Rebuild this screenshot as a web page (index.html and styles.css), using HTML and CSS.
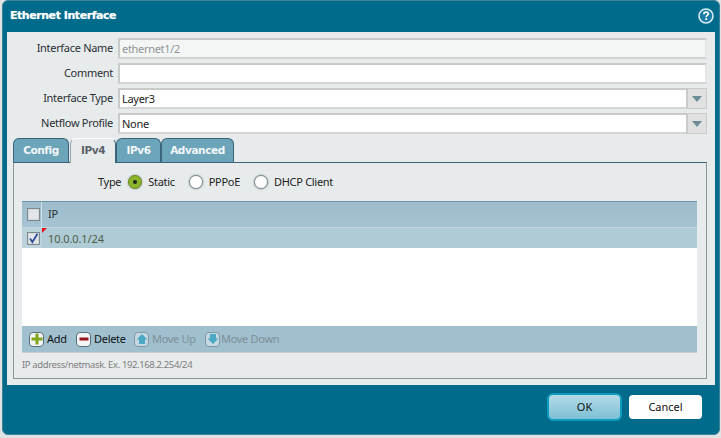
FILE: index.html
```html
<!DOCTYPE html>
<html lang="en">
<head>
<meta charset="utf-8">
<title>Ethernet Interface</title>
<link rel="stylesheet" href="styles.css">
</head>
<body>
<div class="dialog">
  <header class="titlebar">
    <span class="title">Ethernet Interface</span>
    <svg class="help" width="16" height="16" viewBox="0 0 16 16"><circle cx="8" cy="8" r="7" fill="#1b7da6" stroke="#d6edf5" stroke-width="1.6"/><path d="M5.8 6.2C5.9 4.8 6.9 4.1 8.1 4.1C9.4 4.1 10.3 4.9 10.3 6C10.3 7.4 8.2 7.5 8.2 9.2" fill="none" stroke="#fff" stroke-width="1.6"/><rect x="7.3" y="10.3" width="1.8" height="1.8" fill="#fff"/></svg>
  </header>
  <main class="panel">
    <div class="fields">
      <div class="field"><label class="label">Interface Name</label><div class="input disabled">ethernet1/2</div></div>
      <div class="field"><label class="label">Comment</label><div class="input"></div></div>
      <div class="field"><label class="label">Interface Type</label><div class="input select"><span class="value">Layer3</span><span class="arrow"><i></i></span></div></div>
      <div class="field"><label class="label">Netflow Profile</label><div class="input select"><span class="value">None</span><span class="arrow"><i></i></span></div></div>
    </div>
    <nav class="tabs">
      <span class="tab t1">Config</span>
      <span class="tab t2 active">IPv4</span>
      <span class="tab t3">IPv6</span>
      <span class="tab t4">Advanced</span>
    </nav>
    <section class="tabpanel">
      <div class="typerow">
        <span class="typelabel">Type</span>
        <span class="radio on"><i></i></span><span class="rlabel r1">Static</span>
        <span class="radio"></span><span class="rlabel r2">PPPoE</span>
        <span class="radio"></span><span class="rlabel">DHCP Client</span>
      </div>
      <div class="grid">
        <div class="ghead">
          <span class="cbcell"><span class="cb"></span></span>
          <span class="gcell">IP</span>
        </div>
        <div class="grow">
          <span class="cbcell"><span class="cb"><svg width="11" height="11" viewBox="0 0 11 11"><path d="M2 5.500L4.400 9L9.500 0.800" fill="none" stroke="#2d4f9e" stroke-width="1.800"/></svg></span></span>
          <span class="gcell rowtext"><i class="dirty"></i>10.0.0.1/24</span>
        </div>
        <div class="gempty"></div>
        <div class="toolbar">
          <span class="tool tadd"><span class="ticon"><svg width="14" height="14" viewBox="0 0 14 14"><path d="M5.500 1.500h3v4h4v3h-4v4h-3v-4h-4v-3h4z" fill="#7fa51e"/></svg></span>Add</span>
          <span class="tool tdel"><span class="ticon"><svg width="14" height="14" viewBox="0 0 14 14"><rect x="2.500" y="5.500" width="9" height="3" fill="#96151b"/></svg></span>Delete</span>
          <span class="tool off tup"><span class="ticon"><svg width="14" height="14" viewBox="0 0 14 14"><path d="M7 2L12.500 7.500H10V12H4V7.500H1.500z" fill="#4ba9c6"/></svg></span>Move Up</span>
          <span class="tool off tdown"><span class="ticon"><svg width="14" height="14" viewBox="0 0 14 14"><path d="M7 12L12.500 6.500H10V2H4V6.500H1.500z" fill="#4ba9c6"/></svg></span>Move Down</span>
        </div>
      </div>
      <p class="hint">IP address/netmask. Ex. 192.168.2.254/24</p>
    </section>
  </main>
  <footer class="footer">
    <button class="btn ok">OK</button>
    <button class="btn cancel">Cancel</button>
  </footer>
</div>
</body>
</html>
```

FILE: styles.css
```css
* { box-sizing: border-box; }
html, body { margin: 0; padding: 0; height: 100%; }
body {
  width: 721px; height: 438px; overflow: hidden;
  background: #dfe3e4;
  font: 11px/14px "Noto Sans", "Liberation Sans", sans-serif;
  letter-spacing: -.3px;
  color: #222;
  padding: 0 1px 3px 2px;
}
.dialog {
  width: 718px; height: 435px;
  background: #006b8b;
  border-radius: 6px;
  border: 1px solid #3d8297;
  display: flex; flex-direction: column;
  padding: 0 4px;
}
.titlebar {
  height: 31px; flex: none;
  display: flex; align-items: center; justify-content: space-between;
  padding: 0 1px 2px 3px;
  color: #fff;
}
.title { font: bold 11px/14px "DejaVu Sans", sans-serif; letter-spacing: -.45px; text-shadow: 0 0 1px rgba(255,255,255,.6); }
.help { display: block; }
.panel {
  height: 353px; flex: none;
  background: #e8ebec;
  padding: 6px 8px 6px 6px;
  display: flex; flex-direction: column;
}
.fields { display: flex; flex-direction: column; gap: 4px; }
.field { display: flex; align-items: center; gap: 5px; height: 21px; }
.label { width: 100px; text-align: right; color: #2a2f33; padding-bottom: 2px; }
.input {
  flex: 1; height: 21px;
  background: #fff;
  border: 2px solid;
  border-color: #c9cbca #e6e6e6 #d3d4d3 #c9cbca;
  line-height: 17px; padding-left: 2px;
  display: flex; color: #222;
}
.disabled { background: #f4f6f6; color: #8f9496; }
.select .value { flex: 1; }
.arrow {
  width: 21px; margin: -2px -2px -2px 0;
  background: #e1e1e1;
  border: 1px solid #c9cbca;
  border-width: 1px 1px 1px 2px;
  display: flex; align-items: center; justify-content: center;
}
.arrow i {
  width: 0; height: 0;
  border: 5px solid transparent; border-bottom: 0;
  border-top: 6px solid #6e8b98;
}
.tabs { display: flex; height: 24px; margin-top: 4px; align-items: flex-end; position: relative; z-index: 1; }
.tab {
  height: 24px;
  background: #6ca4b9;
  border: 1px solid #39647a; border-bottom: 0;
  border-radius: 6px 6px 0 0;
  color: #f2f7f9;
  font: bold 10.5px/22px "DejaVu Sans", sans-serif; letter-spacing: -.4px;
  text-align: center;
}
.t1 { width: 56px; margin-right: 1px; }
.t2 { width: 46px; }
.t3 { width: 45px; }
.t4 { width: 73px; }
.active {
  background: #e8ebec; color: #5a6268;
  border-color: #fff #39647a #e8ebec #8fa6b1;
  height: 25px; margin-bottom: -1px;
}
.tabpanel {
  height: 217px;
  border: 1px solid #8e9698;
  border-top: 1px solid #39647a;
  padding: 0 9px 0 8px;
}
.typerow { display: flex; align-items: center; height: 38px; padding-left: 76px; }
.typelabel { margin-right: 7px; }
.radio {
  width: 14px; height: 14px; border-radius: 50%;
  background: #fff; border: 1px solid #7d8b92;
  display: flex; align-items: center; justify-content: center;
  box-shadow: 0 0 2px #7d8b92;
}
.radio.on { background: #8cb52a; border-color: #6f8f22; }
.radio i { width: 4px; height: 4px; background: #222; border-radius: 50%; }
.rlabel { margin-left: 6px; }
.r1 { margin-right: 14px; }
.r2 { margin-right: 14px; }
.grid { background: #fff; display: flex; flex-direction: column; height: 152px; border-bottom: 1px solid #c9cdce; }
.ghead { display: flex; height: 27px; background: linear-gradient(#9dbccc, #a5c3d2); border-top: 1px solid #6f95a8; border-bottom: 1px solid #c3d5de; }
.grow { display: flex; height: 20px; background: #aecbd6; }
.cbcell { width: 20px; flex: none; display: flex; align-items: center; padding-left: 5px; border-right: 1px solid #d4e2e8; }
.grow .cbcell { border-right: 0; background: #bcd3dc; }
.cb {
  width: 13px; height: 13px; display: block;
  background: #e3e6e8; border: 1px solid #7b8a91;
  box-shadow: inset 0 0 0 1px #d5d9db;
}
.cb svg { display: block; }
.gcell { flex: 1; padding-left: 6px; line-height: 24px; color: #2a2f33; }
.rowtext { position: relative; line-height: 21px; padding-left: 6px; color: #4f5e46; letter-spacing: -.1px; }
.dirty {
  position: absolute; left: 0; top: 0; width: 0; height: 0;
  border-top: 5px solid #e8101c; border-right: 5px solid transparent;
}
.gempty { flex: 1; }
.toolbar { display: flex; align-items: center; height: 26px; background: #a0bfcf; padding-left: 7px; }
.tool { display: flex; align-items: center; gap: 3px; color: #111; }
.tadd { width: 47px; }
.tdel { width: 58px; }
.tup { width: 71px; }
.tdown { gap: 1px; }
.ticon {
  width: 15px; height: 15px; border-radius: 4px;
  background: #f4f6f6; border: 1px solid #55707c;
  display: flex; align-items: center; justify-content: center; flex: none;
}
.ticon svg { display: block; flex: none; }
.off { color: #7f8f97; }
.off .ticon { background: #c6d9e2; border-color: #7d97a4; }
.hint { margin: 5px 0 0; font-size: 9.5px; letter-spacing: -.38px; line-height: 14px; color: #7d7d7d; }
.footer { flex: 1; display: flex; justify-content: flex-end; align-items: flex-start; gap: 7px; padding: 8px 13px 0 0; }
.btn {
  width: 73px; height: 24px; border-radius: 4px; border: 0;
  font: 11px/14px "Noto Sans", sans-serif; color: #111; padding: 0;
}
.ok {
  width: 75px; height: 28px;
  background: linear-gradient(#b4dbe7, #7dc0d5);
  border: 2px solid #0e9bbd;
  border-radius: 6px;
}
.cancel { background: #fff; margin-top: 2px; }
```
